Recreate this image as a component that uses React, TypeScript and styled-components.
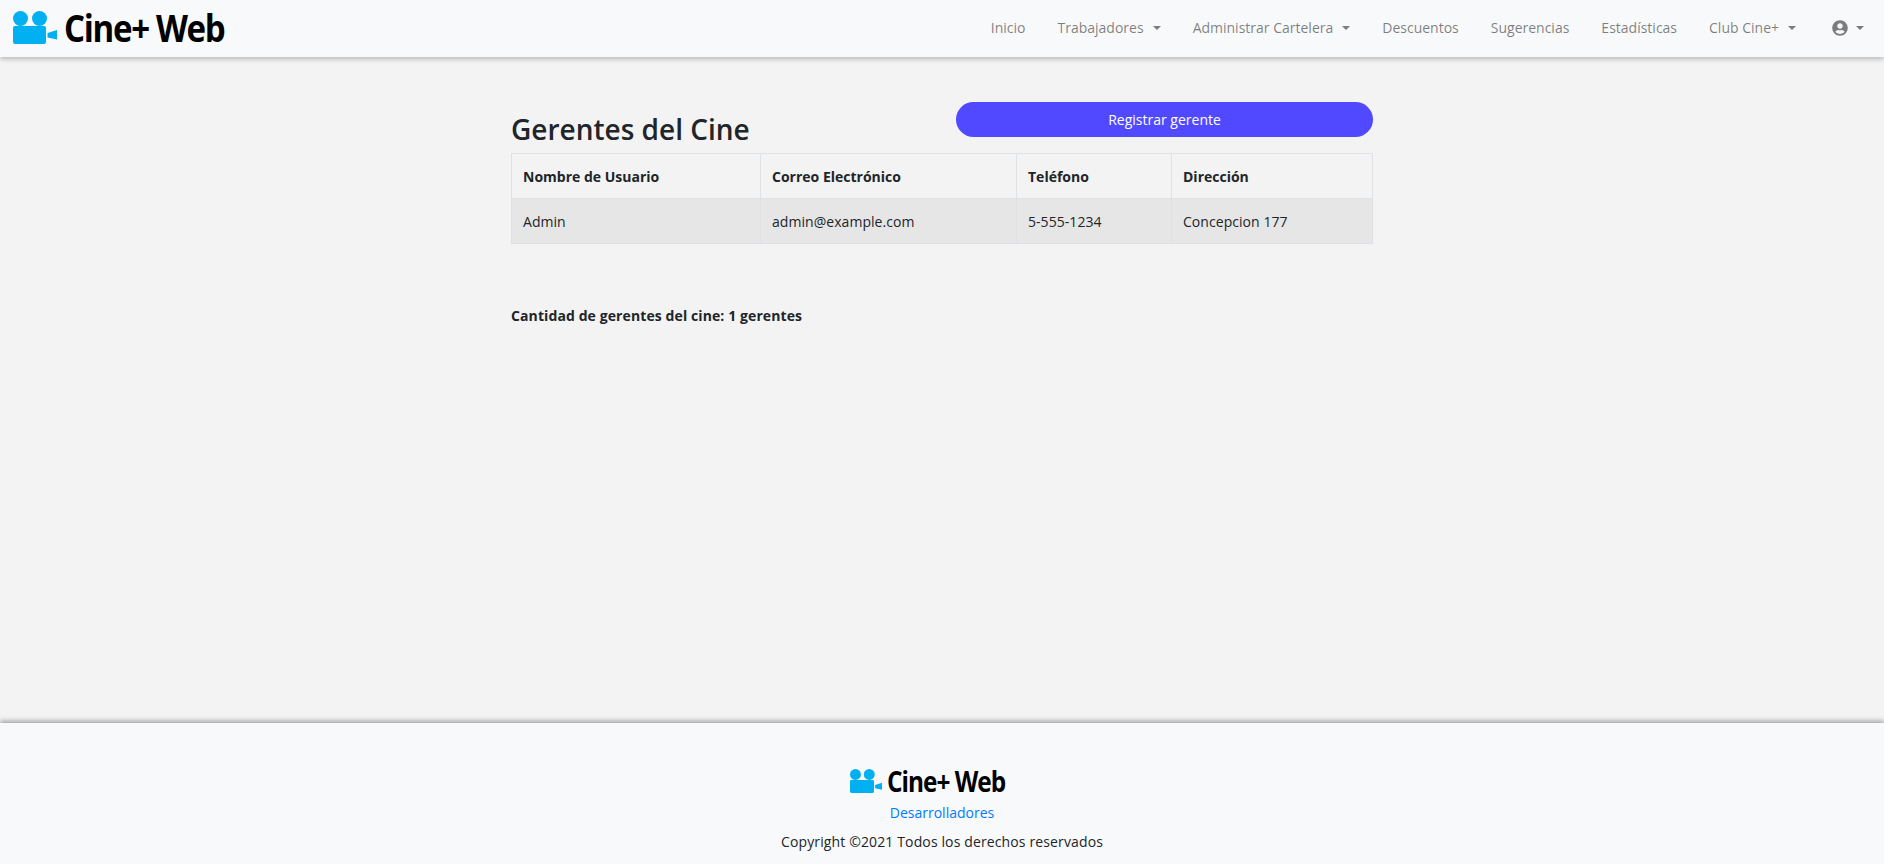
import { createGlobalStyle, styled } from "styled-components";
import { FaUserCircle } from "react-icons/fa";

const GlobalStyle = createGlobalStyle`
    html, body {
        margin: 0;
        padding: 0;
    }
    body {
        background: #f3f3f3;
        color: #212529;
        font-family: "Open Sans", "Noto Sans", "Liberation Sans", sans-serif;
        font-size: 14px;
    }
`;

const navItems = [
    { label: "Inicio" },
    { label: "Trabajadores", caret: true },
    { label: "Administrar Cartelera", caret: true },
    { label: "Descuentos" },
    { label: "Sugerencias" },
    { label: "Estadísticas" },
    { label: "Club Cine+", caret: true },
];

const columns = [
    { title: "Nombre de Usuario", value: "Admin", width: 249 },
    { title: "Correo Electrónico", value: "admin@example.com", width: 256 },
    { title: "Teléfono", value: "5-555-1234", width: 155 },
    { title: "Dirección", value: "Concepcion 177", width: 201 },
];

function Logo({ small }: { small?: boolean }) {
    return (
        <LogoWrap $small={small}>
            <svg width={small ? 34 : 44} height={small ? 24 : 33} viewBox="0 0 44 33">
                <circle cx="7.5" cy="7.5" r="7.5" fill="#00b0f0" />
                <circle cx="26.5" cy="7.5" r="7.5" fill="#00b0f0" />
                <rect x="0" y="15" width="33" height="18" rx="2" fill="#00b0f0" />
                <path d="M34.5 22 L44 19 V28.5 L34.5 26.5 Z" fill="#00b0f0" />
            </svg>
            <LogoText $small={small}>Cine+ Web</LogoText>
        </LogoWrap>
    );
}

function App() {
    return (
        <>
            <GlobalStyle />
            <Page>
                <Navbar>
                    <Logo />
                    <NavList>
                        {navItems.map((item) => (
                            <NavItem key={item.label}>
                                {item.label}
                                {item.caret && <Caret />}
                            </NavItem>
                        ))}
                        <UserItem>
                            <FaUserCircle size={16} />
                            <Caret $near />
                        </UserItem>
                    </NavList>
                </Navbar>
                <Main>
                    <Content>
                        <TitleRow>
                            <Title>Gerentes del Cine</Title>
                            <RegisterButton>Registrar gerente</RegisterButton>
                        </TitleRow>
                        <Table>
                            <colgroup>
                                {columns.map((col) => (
                                    <Col key={col.title} $width={col.width} />
                                ))}
                            </colgroup>
                            <thead>
                                <tr>
                                    {columns.map((col) => (
                                        <Th key={col.title}>{col.title}</Th>
                                    ))}
                                </tr>
                            </thead>
                            <tbody>
                                <tr>
                                    {columns.map((col) => (
                                        <Td key={col.title}>{col.value}</Td>
                                    ))}
                                </tr>
                            </tbody>
                        </Table>
                        <Count>Cantidad de gerentes del cine: 1 gerentes</Count>
                    </Content>
                </Main>
                <Footer>
                    <Logo small />
                    <FooterLink href="#">Desarrolladores</FooterLink>
                    <Copyright>Copyright ©2021 Todos los derechos reservados</Copyright>
                </Footer>
            </Page>
        </>
    );
}

export default App;

const Page = styled.div`
    display: flex;
    flex-direction: column;
    min-height: 864px;
`;

const Navbar = styled.nav`
    display: flex;
    align-items: center;
    justify-content: space-between;
    height: 57px;
    padding: 0 20px 0 13px;
    background: #f8f9fa;
    box-shadow: 0 2px 5px rgba(0, 0, 0, 0.25);
`;

const LogoWrap = styled.div<{ $small?: boolean }>`
    display: flex;
    align-items: center;
    gap: ${(p) => (p.$small ? 4 : 7)}px;
    margin-right: ${(p) => (p.$small ? 30 : 0)}px;
    margin-top: ${(p) => (p.$small ? -1 : -3)}px;
`;

const LogoText = styled.span<{ $small?: boolean }>`
    display: inline-block;
    margin-right: -0.63em;
    color: #000;
    font-family: "Open Sans", sans-serif;
    font-weight: 700;
    font-size: ${(p) => (p.$small ? 28 : 38)}px;
    line-height: 1;
    letter-spacing: -0.04em;
    transform: scaleX(0.87);
    transform-origin: left center;
`;

const NavList = styled.ul`
    display: flex;
    align-items: center;
    gap: 32px;
    margin: -2px 0 0;
    padding: 0;
    list-style: none;
`;

const NavItem = styled.li`
    display: flex;
    align-items: center;
    color: rgba(0, 0, 0, 0.5);
    font-size: 14px;
`;

const UserItem = styled(NavItem)`
    margin-left: 4px;
`;

const Caret = styled.span<{ $near?: boolean }>`
    width: 0;
    height: 0;
    margin-left: ${(p) => (p.$near ? 8 : 9)}px;
    border-top: 4.8px solid rgba(0, 0, 0, 0.5);
    border-left: 4.8px solid transparent;
    border-right: 4.8px solid transparent;
`;

const Main = styled.main`
    flex: 1;
    display: flex;
    justify-content: center;
    padding-top: 45px;
`;

const Content = styled.div`
    width: 862px;
`;

const TitleRow = styled.div`
    display: flex;
    justify-content: space-between;
    align-items: flex-start;
    height: 51px;
`;

const Title = styled.h1`
    margin: 10px 0 0;
    color: #212529;
    font-size: 28px;
    font-weight: 600;
    line-height: 34px;
`;

const RegisterButton = styled.button`
    width: 417px;
    height: 35px;
    border: 0;
    border-radius: 18px;
    background: #5049ff;
    color: #fff;
    font-family: inherit;
    font-size: 14px;
`;

const Table = styled.table`
    width: 861px;
    table-layout: fixed;
    border-collapse: collapse;
`;

const Col = styled.col<{ $width: number }>`
    width: ${(p) => p.$width}px;
`;

const Th = styled.th`
    height: 44px;
    padding: 0 11px;
    border: 1px solid #dee2e6;
    font-size: 14px;
    font-weight: 700;
    text-align: left;
`;

const Td = styled.td`
    height: 44px;
    padding: 0 11px;
    border: 1px solid #dee2e6;
    background: #e6e6e6;
    font-size: 14px;
    letter-spacing: 0.05px;
`;

const Count = styled.p`
    margin: 61px 0 0;
    font-size: 14px;
    font-weight: 700;
    line-height: 21px;
    letter-spacing: 0.1px;
`;

const Footer = styled.footer`
    display: flex;
    flex-direction: column;
    align-items: center;
    height: 141px;
    box-sizing: border-box;
    padding-top: 45px;
    background: #f8f9fa;
    box-shadow: 0 -2px 5px rgba(0, 0, 0, 0.35);
`;

const FooterLink = styled.a`
    margin-top: 7px;
    color: #007bff;
    font-size: 14px;
    line-height: 21px;
    text-decoration: none;
`;

const Copyright = styled.p`
    margin: 8px 0 0;
    font-size: 14px;
    line-height: 21px;
    letter-spacing: 0.13px;
`;
